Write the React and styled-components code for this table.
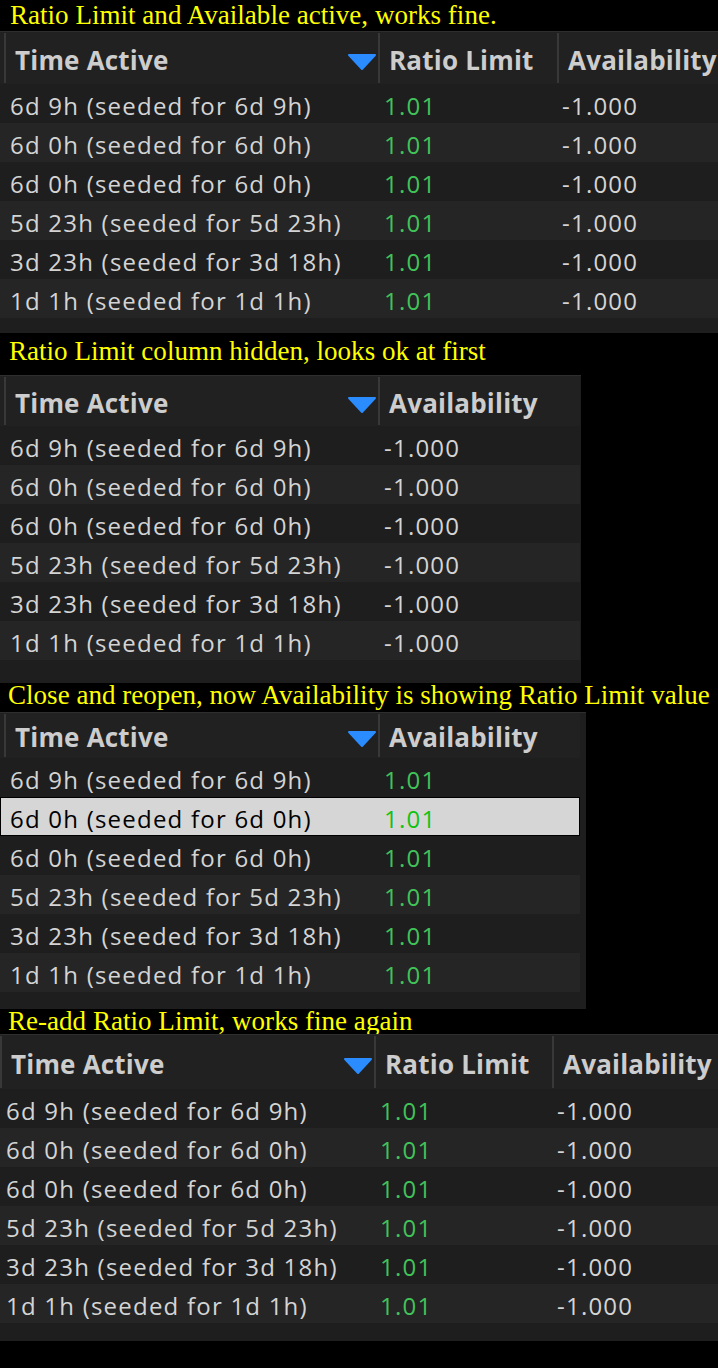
import React from 'react';
import styled, { createGlobalStyle } from 'styled-components';

const GlobalStyle = createGlobalStyle`
  html, body { margin: 0; padding: 0; background: #000; }
  body { width: 718px; min-height: 1368px; overflow: hidden; }
`;

const Page = styled.div`
  display: flex;
  flex-direction: column;
  width: 718px;
`;

const Caption = styled.div`
  height: ${p => p.$h}px;
  box-sizing: border-box;
  padding: ${p => p.$top}px 0 0 ${p => p.$left}px;
  font-family: "Liberation Serif", "Times New Roman", serif;
  font-size: 27px;
  letter-spacing: 0.03px;
  line-height: 24px;
  color: #ffff00;
  white-space: nowrap;
`;

const Table = styled.div`
  width: ${p => (p.$w ? `${p.$w}px` : '100%')};
  box-sizing: border-box;
  padding: 0 ${p => p.$right || 0}px ${p => p.$bottom}px 0;
  background: #1e1e1e;
  border-top: 1px solid #2e2e2e;
  font-family: "Open Sans", "Noto Sans", sans-serif;
  overflow: hidden;
`;

const HeaderRow = styled.div`
  display: grid;
  grid-template-columns: ${p => p.$cols};
  height: ${p => p.$h - 1}px;
  padding: 1px 0 1px;
  box-sizing: border-box;
  background: #212121;
`;

const HeadCell = styled.div`
  display: flex;
  align-items: center;
  justify-content: space-between;
  border-left: 2px solid #383838;
  padding: 0 1px 0 9px;
  font-size: 26px;
  font-weight: 700;
  letter-spacing: 0.2px;
  color: #cdcdcd;
  white-space: nowrap;
  overflow: hidden;
`;

const HeadLabel = styled.span`
  padding-top: 3px;
`;

const SortArrow = styled.svg`
  flex: none;
  margin-top: 7px;
`;

const Row = styled.div`
  display: grid;
  grid-template-columns: ${p => p.$cols};
  height: 39px;
  box-sizing: border-box;
  background: ${p => (p.$hl ? '#d6d6d6' : p.$alt ? '#252525' : 'transparent')};
  box-shadow: ${p => (p.$hl ? 'inset 0 0 0 1px #000' : 'none')};
`;

const Cell = styled.div`
  display: flex;
  align-items: center;
  padding: 3px 0 0 ${p => p.$pad}px;
  font-size: 24px;
  letter-spacing: 1.22px;
  white-space: nowrap;
  overflow: hidden;
  color: ${p =>
    p.$green ? (p.$hl ? '#12c212' : '#41c35a') : p.$hl ? '#000' : '#d4d4d4'};
`;

const times = [
  '6d 9h (seeded for 6d 9h)',
  '6d 0h (seeded for 6d 0h)',
  '6d 0h (seeded for 6d 0h)',
  '5d 23h (seeded for 5d 23h)',
  '3d 23h (seeded for 3d 18h)',
  '1d 1h (seeded for 1d 1h)',
];

function Arrow() {
  return (
    <SortArrow width="30" height="18" viewBox="0 0 30 18">
      <path d="M2 2 L28 2 L15 16 Z" fill="#2a8cff" stroke="#2a8cff" strokeWidth="2" strokeLinejoin="round" />
    </SortArrow>
  );
}

function Grid({ lead, cols, headH, bottom, w, right, values, valueGreen, highlight }) {
  const template = [`${lead}px`, ...cols.map(c => (c.w ? `${c.w}px` : '1fr'))].join(' ');
  return (
    <Table $w={w} $right={right} $bottom={bottom}>
      <HeaderRow $cols={template} $h={headH}>
        <div />
        {cols.map((c, i) => (
          <HeadCell key={c.title}>
            <HeadLabel>{c.title}</HeadLabel>
            {i === 0 && <Arrow />}
          </HeadCell>
        ))}
      </HeaderRow>
      {times.map((t, r) => {
        const hl = highlight === r;
        return (
          <Row key={r} $cols={template} $alt={r % 2 === 1} $hl={hl}>
            <div />
            <Cell $pad={6} $hl={hl}>{t}</Cell>
            {cols.slice(1).map((c, i) => (
              <Cell key={c.title} $pad={i === 0 ? 6 : 5} $green={valueGreen(c.key)} $hl={hl}>
                {values[c.key]}
              </Cell>
            ))}
          </Row>
        );
      })}
    </Table>
  );
}

export default function App() {
  const full = [
    { title: 'Time Active', w: 374 },
    { title: 'Ratio Limit', key: 'ratio', w: 179 },
    { title: 'Availability', key: 'avail' },
  ];
  const full4 = [
    { title: 'Time Active', w: 374 },
    { title: 'Ratio Limit', key: 'ratio', w: 178 },
    { title: 'Availability', key: 'avail' },
  ];
  const hidden = [
    { title: 'Time Active', w: 374 },
    { title: 'Availability', key: 'avail' },
  ];
  const ok = { ratio: '1.01', avail: '-1.000' };
  const wrong = { avail: '1.01' };

  return (
    <Page>
      <GlobalStyle />
      <Caption $h={31} $top={3} $left={10}>Ratio Limit and Available active, works fine.</Caption>
      <Grid lead={4} cols={full} headH={53} bottom={15} values={ok} valueGreen={k => k === 'ratio'} />
      <Caption $h={42} $top={6} $left={9}>Ratio Limit column hidden, looks ok at first</Caption>
      <Grid lead={4} cols={hidden} headH={51} bottom={23} w={581} right={1} values={ok} valueGreen={() => false} />
      <Caption $h={29} $top={0} $left={8}>Close and reopen, now Availability is showing Ratio Limit value</Caption>
      <Grid lead={4} cols={hidden} headH={46} bottom={17} w={586} right={6} values={wrong} valueGreen={() => true} highlight={1} />
      <Caption $h={25} $top={0} $left={8}>Re-add Ratio Limit, works fine again</Caption>
      <Grid lead={0} cols={full4} headH={55} bottom={18} values={ok} valueGreen={k => k === 'ratio'} />
    </Page>
  );
}
